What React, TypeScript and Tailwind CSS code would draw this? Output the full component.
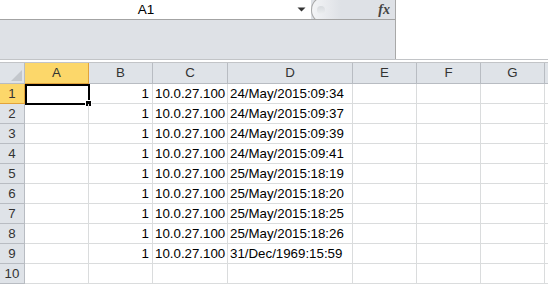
import React from 'react';

const cols = [
  { key: 'A', w: 'w-[64px]' },
  { key: 'B', w: 'w-[64px]' },
  { key: 'C', w: 'w-[75px]' },
  { key: 'D', w: 'w-[125px]' },
  { key: 'E', w: 'w-[64px]' },
  { key: 'F', w: 'w-[64px]' },
  { key: 'G', w: 'w-[64px]' },
];

const rows: { b: string; c: string; d: string }[] = [
  { b: '1', c: '10.0.27.100', d: '24/May/2015:09:34' },
  { b: '1', c: '10.0.27.100', d: '24/May/2015:09:37' },
  { b: '1', c: '10.0.27.100', d: '24/May/2015:09:39' },
  { b: '1', c: '10.0.27.100', d: '24/May/2015:09:41' },
  { b: '1', c: '10.0.27.100', d: '25/May/2015:18:19' },
  { b: '1', c: '10.0.27.100', d: '25/May/2015:18:20' },
  { b: '1', c: '10.0.27.100', d: '25/May/2015:18:25' },
  { b: '1', c: '10.0.27.100', d: '25/May/2015:18:26' },
  { b: '1', c: '10.0.27.100', d: '31/Dec/1969:15:59' },
  { b: '', c: '', d: '' },
];

const App: React.FC = () => {
  return (
    <div className="w-[548px] h-[285px] overflow-hidden bg-white text-black font-['Liberation_Sans',Arial,sans-serif] text-[13.3px]">
      {/* barre de formule */}
      <div className="flex h-[59px]">
        <div className="w-[396px] flex flex-col bg-[#dee1e6] border-r border-[#a8a8a8]">
          <div className="flex h-[20px] border-b border-[#a3a3a3] overflow-hidden">
            <div className="w-[311px] bg-white flex items-center">
              <div className="w-[292px] text-center text-[13.5px] leading-[19px]">A1</div>
              <svg width="9" height="5" viewBox="0 0 9 5" className="ml-[5px]">
                <path d="M0.5 0.5 L8.5 0.5 L4.5 4.5 Z" fill="#333" />
              </svg>
            </div>
            <div className="relative w-[24px] h-[20px]">
              <div className="absolute left-0 top-[-4px] w-[30px] h-[28px] rounded-l-full border-l border-y border-[#a8a8a8] bg-gradient-to-r from-[#f3f4f6] to-[#dee1e6]">
                <div className="absolute left-[5px] top-[9px] w-[8px] h-[8px] rounded-full bg-gradient-to-b from-[#d7dade] to-[#eceef0]" />
              </div>
            </div>
            <div className="flex-1 flex items-center justify-end pr-[5px]">
              <span className="font-['Liberation_Serif',serif] italic font-bold text-[14px] text-[#444] leading-none">fx</span>
            </div>
          </div>
          <div className="flex-1" />
        </div>
        <div className="flex-1 bg-white" />
      </div>
      <div className="h-[4px] bg-white border-t border-[#c2c4c7] border-b border-[#a3a6aa]" />

      {/* en-têtes de colonnes */}
      <div className="flex h-[21px] text-[#333]">
        <div className="w-[25px] shrink-0 bg-[#dfe3e8] border-r border-b border-[#b8bcc2] flex items-end justify-end p-[2px]">
          <svg width="11" height="11" viewBox="0 0 11 11">
            <path d="M11 0 L11 11 L0 11 Z" fill="#c3c7cc" />
          </svg>
        </div>
        {cols.map((c) => (
          <div
            key={c.key}
            className={`${c.w} shrink-0 flex items-center justify-center border-r border-b ${
              c.key === 'A' ? 'bg-[#fcd76a] border-[#e2a33a]' : 'bg-[#dfe3e8] border-[#b8bcc2]'
            }`}
          >
            {c.key}
          </div>
        ))}
        <div className="flex-1 bg-[#dfe3e8] border-b border-[#b8bcc2]" />
      </div>

      {/* lignes */}
      {rows.map((r, i) => (
        <div key={i} className="flex h-[20px]">
          <div
            className={`w-[25px] shrink-0 flex items-center justify-center border-r border-b text-[#333] ${
              i === 0 ? 'bg-[#fcd76a] border-[#e2a33a]' : 'bg-[#dfe3e8] border-[#b8bcc2]'
            }`}
          >
            {i + 1}
          </div>
          <div className="w-[64px] shrink-0 relative border-r border-b border-[#dadcdd]">
            {i === 0 && (
              <>
                <div className="absolute left-0 top-0 right-[-2px] bottom-[-2px] border-2 border-black" />
                <div className="absolute right-[-4px] bottom-[-4px] w-[7px] h-[7px] bg-black border border-white" />
              </>
            )}
          </div>
          <div className="w-[64px] shrink-0 flex items-center justify-end pr-[3px] pt-[1px] border-r border-b border-[#dadcdd]">
            {r.b}
          </div>
          <div className="w-[75px] shrink-0 flex items-center pl-[2px] pt-[1px] border-r border-b border-[#dadcdd] whitespace-nowrap">
            {r.c}
          </div>
          <div className="w-[125px] shrink-0 flex items-center pl-[2px] pt-[1px] border-r border-b border-[#dadcdd] whitespace-nowrap">
            {r.d}
          </div>
          <div className="w-[64px] shrink-0 border-r border-b border-[#dadcdd]" />
          <div className="w-[64px] shrink-0 border-r border-b border-[#dadcdd]" />
          <div className="w-[64px] shrink-0 border-r border-b border-[#dadcdd]" />
          <div className="flex-1 border-b border-[#dadcdd]" />
        </div>
      ))}
    </div>
  );
};

export default App;
